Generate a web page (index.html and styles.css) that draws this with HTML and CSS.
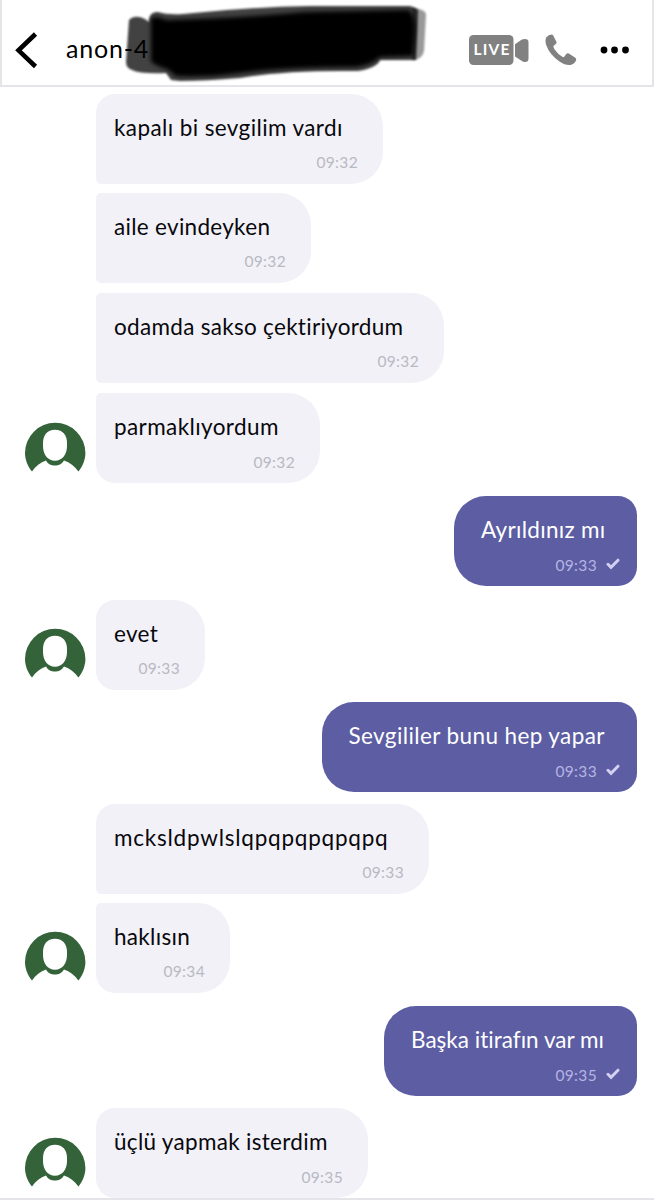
FILE: index.html
```html
<!DOCTYPE html>
<html lang="tr">
<head>
<meta charset="utf-8">
<title>Sohbet</title>
<link rel="stylesheet" href="styles.css">
</head>
<body>
<svg class="defs" width="0" height="0" aria-hidden="true">
  <defs>
    <symbol id="avatar" viewBox="0 0 62 50">
      <path fill="#34633a" fill-rule="evenodd" d="M8 49.500C3.500 44 1 37.500 1 31a30.200 30.200 0 0 1 60.400 0c0 6.500-2.500 13-7 18.500C50.500 44 46 40.500 40 38.500c-2.500 4-5.500 5-9 5s-7-1-9-5C16.500 40.500 11.500 44 8 49.500zM31 7.800C23 7.800 19 13.500 19 21v3c0 8 4.500 14.800 12 14.800s12-6.800 12-14.800v-3c0-7.500-4-13.200-12-13.200z"/>
    </symbol>
    <symbol id="check" viewBox="0 0 14 12">
      <path d="M2 6.300L5 9.300L12 2.200" fill="none" stroke="#d3d0f3" stroke-width="3" stroke-linecap="round"/>
    </symbol>
  </defs>
</svg>
<header class="topbar">
  <svg class="back" width="24" height="38" viewBox="0 0 24 38"><path d="M21.500 3L4.500 19.300L21.500 35.500" fill="none" stroke="#000" stroke-width="4.600"/></svg>
  <h1 class="name">anon-4</h1>
  <svg class="scribble" width="320" height="86" viewBox="0 0 320 86">
    <defs>
      <filter id="soft" x="-10%" y="-20%" width="120%" height="140%"><feGaussianBlur stdDeviation="1.100"/></filter>
      <filter id="softer" x="-10%" y="-20%" width="120%" height="140%"><feGaussianBlur stdDeviation="2"/></filter>
    </defs>
    <path filter="url(#soft)" fill="#000" fill-opacity=".74" d="M9 20Q15 14 25 19L29 22Q29 11 38 12Q48 15 63 14Q130 7 190 6L290 6Q295 7 298 10L296 60L260 60Q257 68 238 71Q165 70 120 78Q85 81 60 81L51 80L46 73Q20 74 12 70Q6 68 6 62Z"/>
    <path filter="url(#soft)" fill="#000" fill-opacity=".4" d="M292 8Q306 9 306 15L304 51Q302 60 292 60Z"/>
    <path filter="url(#softer)" fill="#000" d="M31 18Q37 15 46 20Q120 18 185 12L289 10Q295 16 295 30L293 56L260 57Q250 66 235 67Q165 67 120 73Q85 78 55 76Q50 69 40 67L31 62Z"/>
  </svg>
  <div class="actions">
    <svg class="camera" width="60" height="30" viewBox="0 0 60 30">
      <rect width="44.500" height="30" rx="4.500" fill="#818181"/>
      <path fill="#818181" d="M46 9.200L52.500 4.700Q54 4 56 4Q59.500 4 59.500 7V23.500Q59.500 27 56 27Q54 27 52.500 25.800L46 21.500Z"/>
      <text class="live" x="4.500" y="20.400" textLength="36">LIVE</text>
    </svg>
    <svg class="phone" width="32" height="32" viewBox="0 0 32 32"><path fill="#818181" d="M1.200 3.500Q3.500.5 6.700.5Q7.800.5 8.300 1.700L11.300 7.500Q12 9 10.800 10L8.400 12Q8.200 13.500 9.800 15.800Q12.800 20.200 17.700 23Q18.700 23.500 19.600 22.300L21.500 19.800Q22.500 18.900 23.800 19.500L30.300 23.700Q31.600 24.700 31 26.500Q29.500 30 25.500 31Q20.500 31.700 14.500 27.500Q4.500 20.500 1.200 11Q-.2 6 1.200 3.500Z"/></svg>
    <svg class="more" width="30" height="8" viewBox="0 0 30 8"><circle cx="4" cy="4" r="3.400"/><circle cx="14.500" cy="4" r="3.400"/><circle cx="25.500" cy="4" r="3.400"/></svg>
  </div>
</header>
<main class="chat">
  <div class="row h99"><div class="bubble first w1"><p class="text t1">kapalı bi sevgilim vardı</p><time>09:32</time></div></div>
  <div class="row h100"><div class="bubble mid w2"><p class="text t2">aile evindeyken</p><time>09:32</time></div></div>
  <div class="row h101"><div class="bubble mid w3"><p class="text t3">odamda sakso çektiriyordum</p><time>09:32</time></div></div>
  <div class="row h103"><svg class="avatar"><use href="#avatar"/></svg><div class="bubble last w4"><p class="text t4">parmaklıyordum</p><time>09:32</time></div></div>
  <div class="row sent h103"><div class="bubble w5"><p class="text t5">Ayrıldınız mı</p><div class="meta"><time>09:33</time><svg class="check"><use href="#check"/></svg></div></div></div>
  <div class="row h102"><svg class="avatar"><use href="#avatar"/></svg><div class="bubble single w6"><p class="text t6">evet</p><time>09:33</time></div></div>
  <div class="row sent h102"><div class="bubble w7"><p class="text t7">Sevgililer bunu hep yapar</p><div class="meta"><time>09:33</time><svg class="check"><use href="#check"/></svg></div></div></div>
  <div class="row h99"><div class="bubble first w8"><p class="text t8">mcksldpwlslqpqpqpqpqpq</p><time>09:33</time></div></div>
  <div class="row h103"><svg class="avatar"><use href="#avatar"/></svg><div class="bubble last w9"><p class="text t9">haklısın</p><time>09:34</time></div></div>
  <div class="row sent h102"><div class="bubble w10"><p class="text t10">Başka itirafın var mı</p><div class="meta"><time>09:35</time><svg class="check"><use href="#check"/></svg></div></div></div>
  <div class="row end"><svg class="avatar"><use href="#avatar"/></svg><div class="bubble single w11"><p class="text t11">üçlü yapmak isterdim</p><time>09:35</time></div></div>
</main>
</body>
</html>
```
FILE: styles.css
```css
* { box-sizing: border-box; }
html, body { margin: 0; height: 1200px; overflow: hidden; }
body { background: #fff; font-family: Lato, "Open Sans", sans-serif; color: #08080c; }
.defs { position: absolute; }

.topbar {
  position: relative;
  display: flex;
  align-items: center;
  height: 87px;
  padding: 14px 22px 0 12px;
  border: solid #e4e4e9;
  border-width: 0 2px 2px;
}
.back { flex: none; }
.name { margin: -3px 0 0 28px; font-size: 25px; font-weight: 400; line-height: 30px; letter-spacing: 0.8px; color: #000; }
.scribble { position: absolute; left: 118px; top: 0; }
.actions { display: flex; align-items: center; margin-left: auto; }
.live { font: 700 15.5px Lato, sans-serif; fill: #fff; }
.phone { margin-left: 16px; }
.more { margin-left: 23px; }

.chat { height: 1113px; padding: 6.700px 17px 0 24px; border-bottom: 2px solid #e4e4e9; overflow: hidden; }
.row { display: flex; align-items: flex-start; padding-left: 72px; }
.row:has(.avatar) { padding-left: 0; }
.sent { justify-content: flex-end; padding-left: 0; }
.h99 { height: 99px; }
.h100 { height: 100px; }
.h101 { height: 100.5px; }
.h102 { height: 102px; }
.h103 { height: 103.3px; }
.avatar { flex: none; width: 62px; height: 50px; margin: 28.500px 10px 0 0; }

.bubble {
  display: flex;
  flex-direction: column;
  height: 90px;
  padding: 19px 25px 0 18px;
  background: #f2f1f8;
  border-radius: 19px 32px 32px 19px;
}
.first { border-bottom-left-radius: 5px; }
.mid { border-top-left-radius: 5px; border-bottom-left-radius: 5px; }
.last { border-top-left-radius: 5px; }
.sent .bubble {
  padding: 19px 17px 0 27px;
  background: #5c5da2;
  border-radius: 32px 19px 19px 32px;
  color: #fff;
}
.text { margin: 0; font-size: 22.5px; line-height: 30px; letter-spacing: 0.3px; white-space: nowrap; }
time { align-self: flex-end; margin-top: 9.5px; font-size: 15.5px; line-height: 20px; letter-spacing: 0.35px; color: #b9b9c2; }
.meta { display: flex; justify-content: flex-end; margin-top: 10px; }
.meta time { margin: 0; color: #b6b3e3; }
.check { width: 14px; height: 12px; margin: 3px 0 0 9px; }

.w1 { width: 287px; }
.w2 { width: 215px; }
.w3 { width: 348px; }
.w4 { width: 224px; }
.w5 { width: 183px; }
.w6 { width: 109px; }
.w7 { width: 315.500px; }
.w8 { width: 333px; }
.w9 { width: 134px; }
.w10 { width: 253px; }
.w11 { width: 272px; }

.t1, .t4, .t7 { letter-spacing: 0.4px; }
.t8 { letter-spacing: 0.77px; }
.t10 { letter-spacing: 0.02px; }
```
